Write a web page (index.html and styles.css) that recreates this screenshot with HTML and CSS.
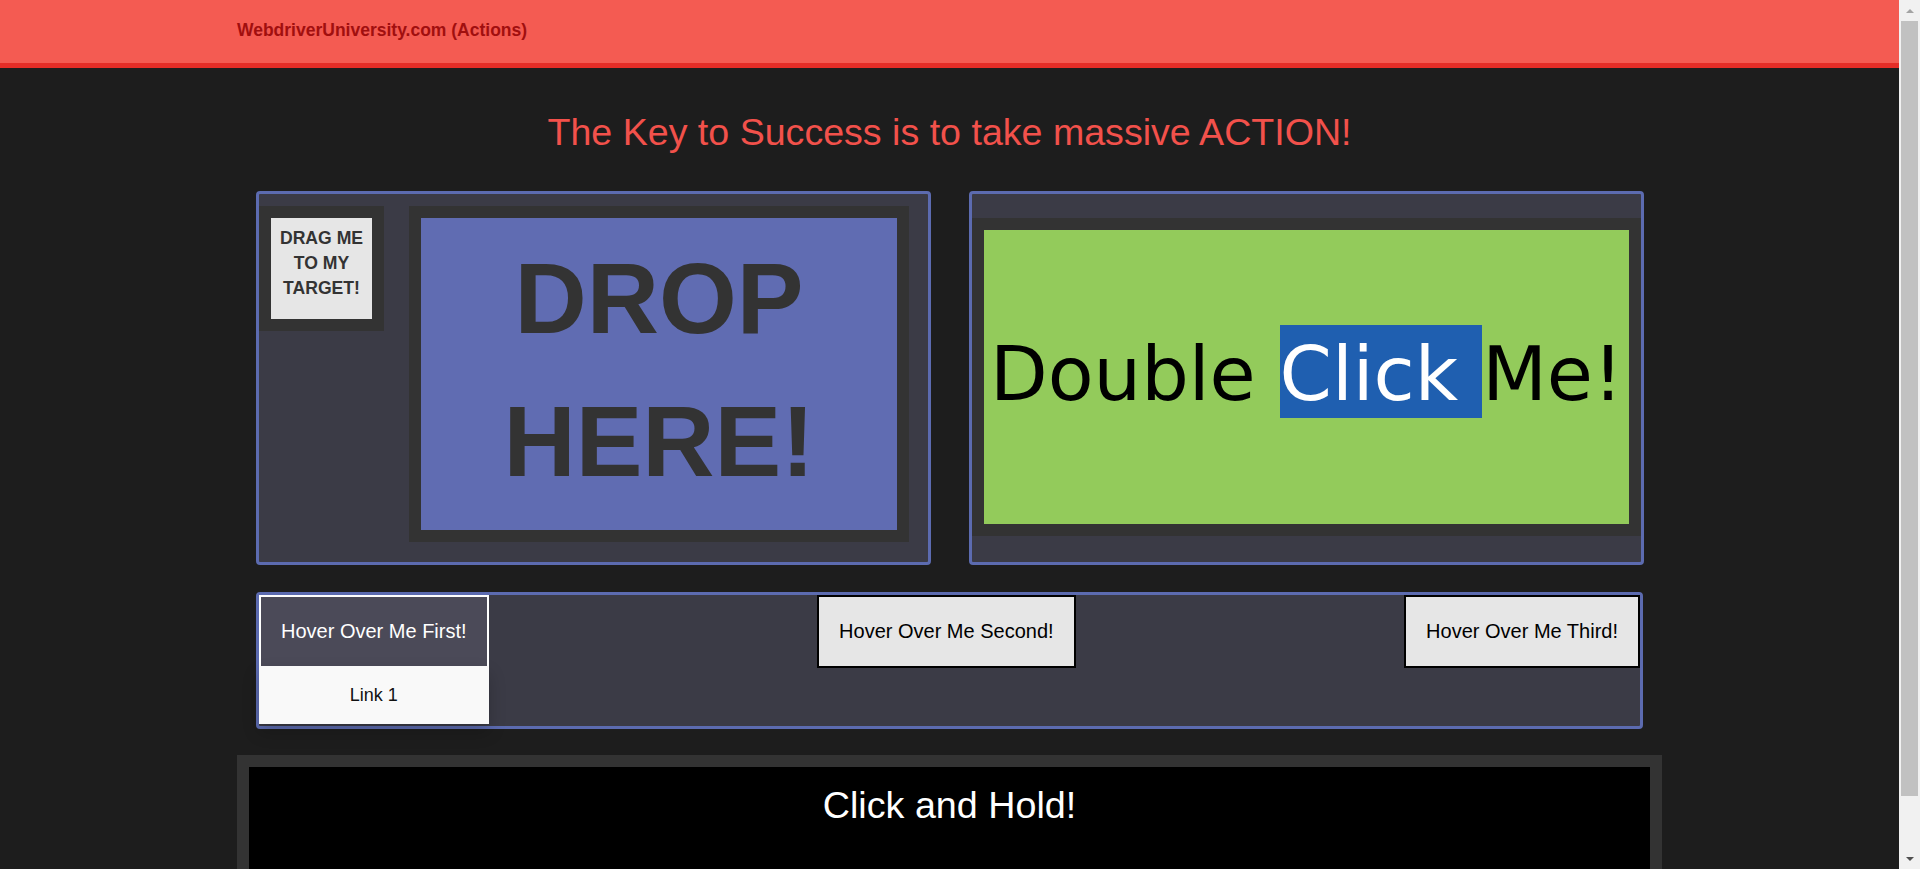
FILE: index.html
```html
<!DOCTYPE html>
<html lang="en">
<head>
<meta charset="utf-8">
<title>WebDriver | Actions</title>
<link rel="stylesheet" href="styles.css">
</head>
<body>
<header class="topbar">
  <div class="brand">WebdriverUniversity.com (Actions)</div>
</header>
<main class="page">
  <h1 class="headline">The Key to Success is to take massive ACTION!</h1>
  <div class="row-top">
    <section class="panel panel-drag">
      <div class="draggable"><p>DRAG ME TO MY TARGET!</p></div>
      <div class="droppable"><p>DROP HERE!</p></div>
    </section>
    <section class="panel panel-dbl">
      <div class="dbl-frame">
        <div class="dbl-area"><p>Double <span class="sel">Click </span>Me!</p></div>
      </div>
    </section>
  </div>
  <section class="panel panel-hover">
    <div class="hover-wrap">
      <div class="hover-btn active">Hover Over Me First!</div>
      <div class="dropdown"><a class="dropdown-link">Link 1</a></div>
    </div>
    <div class="hover-wrap">
      <div class="hover-btn">Hover Over Me Second!</div>
    </div>
    <div class="hover-wrap">
      <div class="hover-btn">Hover Over Me Third!</div>
    </div>
  </section>
  <div class="hold-frame">
    <div class="hold-area"><p>Click and Hold!</p></div>
  </div>
</main>
<div class="scrollbar" aria-hidden="true">
  <div class="sb-arrow sb-up"></div>
  <div class="sb-track"><div class="sb-thumb"></div></div>
  <div class="sb-arrow sb-down"></div>
</div>
</body>
</html>
```
FILE: styles.css
```css
* { box-sizing: border-box; }

body {
  margin: 0;
  background: #1d1d1d;
  font-family: "Liberation Sans", Arial, sans-serif;
  line-height: 1.42857;
}

.topbar {
  height: 68px;
  background: #f45b52;
  border-bottom: 5px solid #e52d27;
  padding: 18px 0 0 237px;
}

.brand {
  font-size: 17.5px;
  font-weight: bold;
  color: #a10f0f;
}

.page {
  width: 1425px;
  margin-left: 237px;
  padding-bottom: 16px;
}

.headline {
  margin: 0;
  padding-top: 44px;
  font-size: 37.6px;
  line-height: 1.1;
  font-weight: normal;
  color: #f2514b;
  text-align: center;
}

.row-top {
  display: flex;
  gap: 38px;
  margin: 38px 0 0 19px;
}

.panel {
  background: #3b3b46;
  border: 3px solid #5c6bb0;
  border-radius: 4px;
}

.panel-drag {
  width: 675px;
  height: 374px;
  display: flex;
  align-items: flex-start;
  gap: 25px;
  padding-top: 12px;
}

.draggable {
  width: 125px;
  height: 125px;
  border: 12px solid #333;
  background: #e6e6e6;
  text-align: center;
  padding-top: 7.6px;
}

.draggable p {
  margin: 0;
  font-size: 17.6px;
  font-weight: bold;
  color: #333;
}

.droppable {
  width: 500px;
  height: 336px;
  border: 12px solid #333;
  background: #606cb2;
  text-align: center;
  padding-top: 8.5px;
}

.droppable p {
  margin: 0;
  font-size: 100px;
  font-weight: bold;
  color: #333;
}

.panel-dbl {
  width: 675px;
  height: 374px;
  padding-top: 24px;
  padding-left: 0;
  padding-right: 0;
}

.dbl-frame {
  border: 12px solid #333;
  height: 318px;
}

.dbl-area {
  background: #93cb5b;
  height: 294px;
  padding-top: 100px;
  text-align: center;
}

.dbl-area p {
  margin: 0;
  font-family: "DejaVu Sans", Verdana, sans-serif;
  font-size: 75px;
  line-height: normal;
  white-space: nowrap;
  color: #000;
}

.sel {
  background: #1f5fb0;
  color: #fff;
  padding-top: 5px;
}

.panel-hover {
  margin: 27px 0 0 19px;
  width: 1387px;
  height: 137px;
  display: flex;
  justify-content: space-between;
  align-items: flex-start;
  padding: 0 0 0 0;
}

.hover-wrap {
  position: relative;
}

.hover-btn {
  padding: 20px;
  font-size: 20px;
  border: 2px solid #000;
  background: #e6e6e6;
  color: #000;
  white-space: nowrap;
}

.hover-btn.active {
  background: #4b4a58;
  color: #fff;
  border-color: #fff;
  border-bottom-width: 0;
}

.dropdown {
  position: absolute;
  left: 0;
  right: 0;
  top: 100%;
  background: #f9f9f9;
  box-shadow: 0 8px 16px rgba(0, 0, 0, 0.2);
  text-align: center;
  padding: 17px 0 15px;
}

.dropdown-link {
  font-size: 18px;
  color: #111;
}

.hold-frame {
  margin-top: 26px;
  height: 166px;
  border: 12px solid #333;
  background: #000;
}

.hold-area p {
  margin: 0;
  padding-top: 18px;
  font-size: 37.7px;
  line-height: 1.1;
  color: #fff;
  text-align: center;
}

/* fake classic scrollbar overlay */
.scrollbar {
  position: fixed;
  top: 0;
  right: 0;
  width: 21px;
  height: 100vh;
  background: #f1f1f1;
  display: flex;
  flex-direction: column;
  align-items: center;
}

.sb-arrow {
  height: 21px;
  width: 21px;
  display: flex;
  align-items: center;
  justify-content: center;
}

.sb-up::before,
.sb-down::before {
  content: "";
  width: 0;
  height: 0;
  border-left: 4px solid transparent;
  border-right: 4px solid transparent;
}

.sb-up::before {
  border-bottom: 4px solid #a3a3a3;
}

.sb-down::before {
  border-top: 4px solid #505050;
}

.sb-track {
  flex: 1;
  width: 100%;
  padding: 0 2px;
}

.sb-thumb {
  height: 775px;
  background: #c1c1c1;
}
```
